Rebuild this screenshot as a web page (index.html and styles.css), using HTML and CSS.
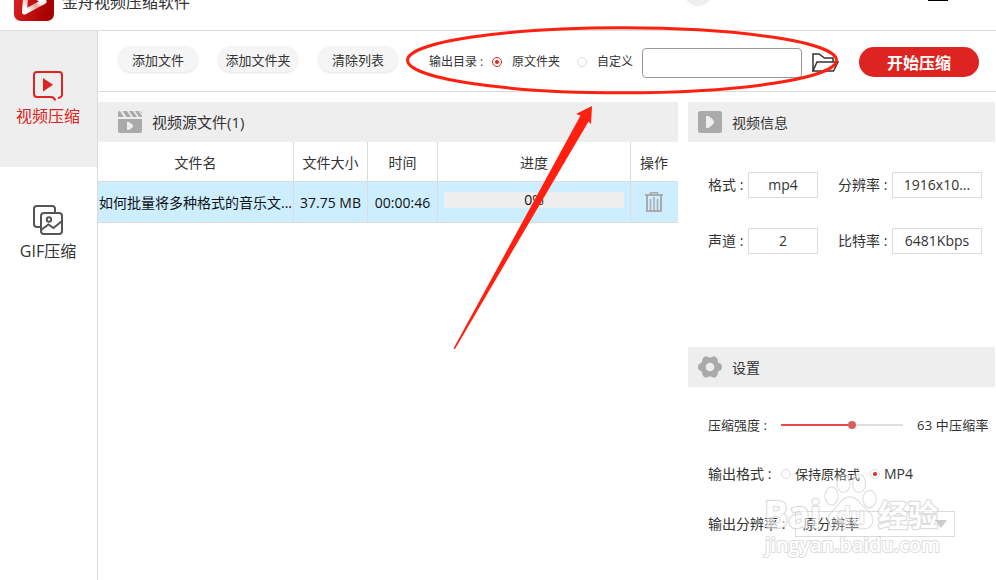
FILE: index.html
```html
<!DOCTYPE html>
<html lang="zh-CN">
<head>
  <meta charset="UTF-8" />
  <meta name="viewport" content="width=device-width, initial-scale=1.0" />
  <title>金舟视频压缩软件</title>
  <link rel="stylesheet" href="styles.css">
</head>
<body>
  <header class="titlebar">
    <svg class="logo" width="40" height="40" viewBox="0 0 40 40">
      <defs>
        <linearGradient id="logoBg" x1="0" y1="0" x2="1" y2="0.3">
          <stop offset="0" stop-color="#e02222" />
          <stop offset="0.6" stop-color="#c01010" />
          <stop offset="1" stop-color="#a80000" />
        </linearGradient>
        <linearGradient id="logoFold" x1="0" y1="1" x2="1" y2="0">
          <stop offset="0.1" stop-color="#fff" />
          <stop offset="0.45" stop-color="#e8a0a0" />
          <stop offset="0.65" stop-color="#fff" />
        </linearGradient>
      </defs>
      <rect width="40" height="40" rx="7" fill="url(#logoBg)" />
      <path d="M12 10 L10.500 31 L30 20.500 Z" fill="none" stroke="url(#logoFold)" stroke-width="5" stroke-linejoin="round" />
    </svg>
    <span class="app-name">金舟视频压缩软件</span>
    <span class="avatar"></span>
    <span class="minimize"></span>
  </header>

  <div class="app">
    <nav class="sidebar">
      <a class="nav-item active">
        <svg width="30" height="30" viewBox="0 0 30 30" fill="none" stroke="#dd2420" stroke-width="2">
          <path d="M25 27 Q29 26.500 29 23.500 V4 Q29 1 26 1 H4 Q1 1 1 4 V23 Q1 26 4 26 H18 Q21.500 26.200 22.300 29.500" />
          <path d="M10 7 L20 13.800 L10 20.500 Z" fill="#dd2420" stroke="none" />
        </svg>
        <span>视频压缩</span>
      </a>
      <a class="nav-item">
        <svg width="30" height="30" viewBox="0 0 30 30" fill="none" stroke="#555" stroke-width="2">
          <path d="M7 22 H4 Q1 22 1 19 V4 Q1 1 4 1 H19 Q22 1 22 4 V7" />
          <rect x="8" y="8" width="21" height="21" rx="3" />
          <circle cx="16" cy="14.500" r="2.200" />
          <path d="M8 25 L15.500 19.500 L20.500 23 L29 16" />
        </svg>
        <span>GIF压缩</span>
      </a>
    </nav>

    <main class="main">
      <div class="toolbar">
        <button class="btn">添加文件</button>
        <button class="btn">添加文件夹</button>
        <button class="btn">清除列表</button>
        <span class="dir-label">输出目录 :</span>
        <span class="radio big checked"></span>
        <span class="dir-source">原文件夹</span>
        <span class="radio big"></span>
        <span class="dir-custom">自定义</span>
        <input class="dir-input" type="text" />
        <svg class="folder" width="28" height="20" viewBox="0 0 28 20" fill="none" stroke="#333" stroke-width="1.500">
          <path d="M1 18 V1 H7 L12.500 5 H21 V9" />
          <path d="M1 18 L5 9 H26 L21.500 18 Z" />
        </svg>
        <button class="start">开始压缩</button>
      </div>

      <div class="content">
        <section class="files">
          <div class="bar">
            <svg width="24" height="22" viewBox="0 0 24 22" fill="#aaa">
              <path d="M0 6 V2 Q0 0 2 0 L6 6 Z M4.500 0 H9 L13 6 H8.500 Z M11 0 H15 L19 6 H15 Z M17 0 H20.500 L24 5 V6 H21 Z M22 0 Q24 0 24 2 V3 Z" />
              <path fill-rule="evenodd" d="M0 8 H24 V20 Q24 22 22 22 H2 Q0 22 0 20 Z M9 11 V19 H11 L15 16 V14 L11 11 Z" />
            </svg>
            <span class="bar-title files-title">视频源文件(1)</span>
          </div>
          <table class="file-table">
            <colgroup>
              <col class="col-name"><col class="col-size"><col class="col-time"><col class="col-progress"><col class="col-action">
            </colgroup>
            <thead>
              <tr>
                <th>文件名</th>
                <th>文件大小</th>
                <th>时间</th>
                <th>进度</th>
                <th>操作</th>
              </tr>
            </thead>
            <tbody>
              <tr>
                <td>如何批量将多种格式的音乐文...</td>
                <td>37.75 MB</td>
                <td>00:00:46</td>
                <td><div class="progress">0%</div></td>
                <td>
                  <svg class="trash" width="18" height="20" viewBox="0 0 18 20" fill="none" stroke="#aaa">
                    <path d="M0 3 H18" stroke-width="2" />
                    <path d="M5.500 2 V0.800 H12.500 V2" stroke-width="1.500" />
                    <path d="M2 4 V19 H16 V4" stroke-width="2" />
                    <path d="M5.500 7 V18 M9 5 V18 M12.500 7 V18" stroke-width="1.500" />
                  </svg>
                </td>
              </tr>
            </tbody>
          </table>
        </section>

        <aside class="side">
          <div class="bar">
            <svg width="24" height="22" viewBox="0 0 24 22">
              <rect width="24" height="22" rx="2.500" fill="#aaa" />
              <path d="M8 5 H10.500 Q16 8.500 16 11 Q16 13.500 10.500 17 H8 Z" fill="#eee" />
            </svg>
            <span class="bar-title">视频信息</span>
          </div>
          <div class="info">
            <span>格式 :</span><span class="value">mp4</span>
            <span class="second">分辨率 :</span><span class="value">1916x10...</span>
            <span>声道 :</span><span class="value">2</span>
            <span class="second">比特率 :</span><span class="value">6481Kbps</span>
          </div>

          <div class="bar">
            <svg width="24" height="22" viewBox="0 0 24 22">
              <path d="M4.500 3 Q6 0 8.500 0.300 Q10 1.500 12 1.500 Q14 1.500 15.500 0.300 Q18 0 19.500 3 Q19.500 6 21 7 L23 8 Q24 9 24 11 Q24 13 23 14 L21 15 Q19.500 16 19.500 19 Q18 22 15.500 21.700 Q14 20.500 12 20.500 Q10 20.500 8.500 21.700 Q6 22 4.500 19 Q4.500 16 3 15 L1 14 Q0 13 0 11 Q0 9 1 8 L3 7 Q4.500 6 4.500 3 Z" fill="#aaa" />
              <circle cx="12" cy="11" r="4.300" fill="#eee" />
            </svg>
            <span class="bar-title">设置</span>
          </div>
          <div class="setting strength">
            <span class="strength-label">压缩强度 :</span>
            <span class="slider"><span class="slider-fill"></span><span class="slider-knob"></span></span>
            <span class="strength-value">63 中压缩率</span>
          </div>
          <div class="setting format">
            <span class="format-label">输出格式 :</span>
            <span class="radio"></span>
            <span class="format-keep">保持原格式</span>
            <span class="radio checked"></span>
            <span class="format-mp4">MP4</span>
          </div>
          <div class="setting resolution">
            <span class="resolution-label">输出分辨率 :</span>
            <div class="select"><span>原分辨率</span><span class="caret"></span></div>
          </div>
        </aside>
      </div>
    </main>
  </div>

  <!-- watermark, ellipse and arrow lie over the window -->
  <svg class="overlay" width="996" height="580" viewBox="0 0 996 580">
    <g class="watermark">
      <text class="wm-brand" x="764" y="528" textLength="57" lengthAdjust="spacingAndGlyphs">Bai</text>
      <g class="wm-paw">
        <ellipse cx="831.500" cy="496" rx="6.500" ry="9" />
        <ellipse cx="843.500" cy="483.500" rx="6.500" ry="9" />
        <ellipse cx="859" cy="483.500" rx="6.500" ry="9" />
        <ellipse cx="869.500" cy="499" rx="6.500" ry="8.500" />
        <path d="M850 497 Q856 497 861 504 Q866 509 871 514 Q875 522 870 527 Q866 530 850 528 Q836 531 831 527 Q826 521 830 514 L839 504 Q844 497 850 497 Z" />
      </g>
      <text class="wm-du" x="837" y="524" textLength="28" lengthAdjust="spacingAndGlyphs">du</text>
      <text class="wm-cn" x="878" y="526">经验</text>
      <text class="wm-url" x="765" y="552" textLength="175" lengthAdjust="spacingAndGlyphs">jingyan.baidu.com</text>
    </g>
    <ellipse cx="622" cy="60.300" rx="214.500" ry="32.500" fill="none" stroke="#ff2010" stroke-width="3" />
    <path d="M453.500 348.500 L580.500 115.500 L576 114 L592 106 L591 124 L588.500 121.500 L455 349 Z" fill="#ff2010" />
  </svg>
</body>
</html>
```

FILE: styles.css
```css
* { box-sizing: border-box; }
body {
  margin: 0;
  width: 996px;
  height: 580px;
  overflow: hidden;
  background: #fff;
  color: #333;
  font-family: "Open Sans", "Noto Sans CJK SC", sans-serif;
  font-size: 14px;
  font-weight: 400;
  line-height: 20px;
  white-space: nowrap;
}
svg { display: block; flex: none; }
button { border: 0; padding: 0; font-family: inherit; color: inherit; }

/* title bar, cut off by the top edge */
.titlebar { display: flex; height: 31px; padding-left: 14px; border-bottom: 1px solid #dcdcdc; overflow: hidden; }
.logo { margin-top: -19px; }
.app-name { margin: -8px 0 0 8px; width: 128px; font-size: 16px; }
.avatar { width: 28px; height: 28px; margin: -22px 0 0 494px; border-radius: 50%; background: #eee; }
.minimize { width: 20px; height: 1px; margin-left: 216px; background: #000; }

.app { display: flex; height: 549px; }
.sidebar { width: 98px; border-right: 1px solid #dcdcdc; }
.nav-item { display: flex; flex-direction: column; align-items: center; height: 136px; padding: 40px 1px 0 0; font-size: 16px; }
.nav-item span { margin-top: 5px; }
.nav-item + .nav-item { padding-top: 38px; }
.nav-item + .nav-item span { margin-top: 6px; }
.nav-item.active { background: #eee; color: #dd2420; }

.main { width: 898px; }
.toolbar { display: flex; align-items: center; height: 61px; padding: 1px 0 0 20px; border-bottom: 1px solid #dcdcdc; font-size: 12px; }
.btn { width: 80px; height: 26px; margin: -5px 20px 0 0; border-radius: 13px; background: #f5f5f5; box-shadow: 0 1px 2px #e4e4e4; font-size: 13px; }
.dir-label { width: 63px; margin-left: 11px; }
.dir-source { width: 65px; margin-left: 10px; }
.dir-custom { width: 45px; margin-left: 10px; }
.radio { flex: none; display: flex; align-items: center; justify-content: center; width: 10px; height: 10px; border: 1px solid #ddd; border-radius: 50%; background: #fff; }
.radio.checked::after { content: ""; width: 4px; height: 4px; border-radius: 50%; background: #dd2420; }
.radio.big.checked { border-color: #dd2420; }
.dir-input { width: 160px; height: 30px; margin-top: 2px; border: 1px solid #999; border-radius: 4px; background: #fff; }
.folder { margin: 2px 0 0 10px; }
.start { width: 120px; height: 30px; margin-left: 19px; border-radius: 15px; background: #dd2420; color: #fff; font-size: 16px; font-weight: 700; }

.content { display: flex; gap: 10px; padding-top: 10px; }
.files { width: 580px; }
.side { width: 307px; }
.bar { display: flex; align-items: center; height: 40px; padding-left: 10px; background: #eee; }
.files .bar { padding-left: 20px; }
.bar-title { margin: 1px 0 0 10px; }
.files-title { margin-top: 0; font-size: 15px; }

.file-table { width: 580px; table-layout: fixed; border-collapse: separate; border-spacing: 0; }
.col-name { width: 196px; }
.col-size { width: 74px; }
.col-time { width: 70px; }
.col-progress { width: 193px; }
.col-action { width: 47px; }
th, td { padding: 2px 0 0; border-right: 1px solid #dcdcdc; border-bottom: 1px solid #dcdcdc; text-align: center; font-weight: 400; }
th { height: 40px; }
td { height: 41px; background: #cef; color: #111; }
th:last-child, td:last-child { padding-right: 1px; border-right: 0; }
.progress { height: 16px; margin: -7px 6px 0; background: #eee; line-height: 16px; }
.trash { margin: -2px auto 0; }

.info { display: grid; grid-template-columns: 40px 70px 74px 90px; row-gap: 30px; height: 205px; padding: 30px 0 0 20px; align-content: start; align-items: center; }
.info .second { padding-left: 20px; }
.value { height: 26px; border: 1px solid #dcdcdc; text-align: center; line-height: 24px; }

.setting { display: flex; align-items: center; padding-left: 20px; }
.strength { height: 26px; margin-top: 25px; font-size: 13px; }
.strength-label { width: 73px; }
.strength-value { letter-spacing: 0.2px; }
.slider { display: flex; align-items: center; width: 122px; height: 2px; margin-right: 14px; background: #e0e0e0; }
.slider-fill { width: 67px; height: 2px; background: #e84c4a; }
.slider-knob { width: 8px; height: 8px; border-radius: 50%; background: #d9605a; }
.format { height: 26px; margin-top: 23px; font-size: 13px; }
.format-label { width: 73px; font-size: 14px; }
.format-keep { width: 75px; margin-left: 4px; }
.format-mp4 { margin-left: 4px; font-size: 14px; }
.resolution { height: 26px; margin-top: 24px; }
.resolution-label { width: 87px; }
.select { display: flex; align-items: center; justify-content: space-between; width: 160px; height: 26px; padding: 0 7px; border: 1px solid #dcdcdc; }
.caret { border: 6px solid transparent; border-top: 8px solid #ccc; border-bottom: 0; }

.overlay { position: absolute; left: 0; top: 0; pointer-events: none; }
.watermark { fill: #fff; stroke: #c8c8c8; stroke-width: 2.5; stroke-linejoin: round; paint-order: stroke; opacity: 0.6; }
.wm-paw { fill-opacity: 0.4; stroke-width: 1.3; }
.wm-brand { font: 700 37px "Open Sans", sans-serif; }
.wm-du { font: 700 24px "Open Sans", sans-serif; stroke-width: 2; }
.wm-cn { font: 700 30px "Noto Sans CJK SC", sans-serif; }
.wm-url { font: 600 20px "Open Sans", sans-serif; stroke-width: 2; }
```
